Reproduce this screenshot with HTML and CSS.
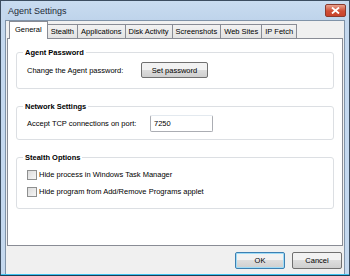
FILE: index.html
```html
<!DOCTYPE html>
<html lang="en">
<head>
  <meta charset="UTF-8" />
  <title>Agent Settings</title>
  <link rel="stylesheet" href="styles.css">
</head>
<body>
  <div class="window">
    <!-- Title bar -->
    <div class="titlebar">
      <span class="title">Agent Settings</span>
      <span class="close">
        <svg width="9" height="7" viewBox="0 0 9 7"><path d="M1 0.5 L8 6.5 M8 0.5 L1 6.5" stroke="#fff" stroke-width="1.8"/></svg>
      </span>
    </div>
    <div class="client">
      <!-- Tabs -->
      <div class="tabs">
        <span class="tab active">General</span>
        <span class="tab">Stealth</span>
        <span class="tab">Applications</span>
        <span class="tab">Disk Activity</span>
        <span class="tab">Screenshots</span>
        <span class="tab">Web Sites</span>
        <span class="tab">IP Fetch</span>
      </div>
      <div class="panel">
        <fieldset class="group pass">
          <legend>Agent Password</legend>
          <div class="row">
            <span class="label">Change the Agent password:</span>
            <button class="btn set">Set password</button>
          </div>
        </fieldset>
        <fieldset class="group net">
          <legend>Network Settings</legend>
          <div class="row">
            <span class="label wide">Accept TCP connections on port:</span>
            <span class="input">7250</span>
          </div>
        </fieldset>
        <fieldset class="group stealth">
          <legend>Stealth Options</legend>
          <label class="check"><span class="box"></span>Hide process in Windows Task Manager</label>
          <label class="check"><span class="box"></span>Hide program from Add/Remove Programs applet</label>
        </fieldset>
      </div>
      <!-- Dialog buttons -->
      <div class="footer">
        <button class="btn ok">OK</button>
        <button class="btn">Cancel</button>
      </div>
    </div>
  </div>
</body>
</html>
```

FILE: styles.css
```css
html, body { margin: 0; padding: 0; }
body {
  font-family: "Liberation Sans", Arial, sans-serif;
  font-size: 7.5px;
  color: #000;
  background: #fff;
}
.window {
  width: 350px;
  height: 276px;
  box-sizing: border-box;
  border: 1px solid #3c4d60;
  border-bottom-color: #1b3c54;
  background: #c4d8ee;
  padding: 0 4px 1px 4px;
  display: flex;
  flex-direction: column;
  box-shadow: inset 0 -1px 0 #3fc2ef;
}
/* Title bar */
.titlebar {
  height: 19px;
  display: flex;
  align-items: center;
  justify-content: space-between;
  background: linear-gradient(#c9dcf0, #bfd4eb);
}
.title { font-size: 9px; color: #1e2a36; padding-left: 3px; }
.close {
  width: 19px;
  height: 11px;
  margin-right: -1px;
  border: 1px solid #8b3a2e;
  border-radius: 2px;
  background: linear-gradient(#e9a28e, #cf4d35 55%, #c9432b);
  display: flex;
  align-items: center;
  justify-content: center;
}
.client {
  flex: 1;
  background: #f0f0f0;
  border: 1px solid #8093a8;
  border-bottom: 0;
  padding: 1px 1px 0 1px;
  display: flex;
  flex-direction: column;
}
/* Tabs */
.tabs { display: flex; height: 16px; align-items: flex-end; padding-left: 4px; position: relative; z-index: 1; }
.tab {
  height: 13px;
  line-height: 13px;
  padding: 0 3px;
  border: 1px solid #898c95;
  border-bottom: 0;
  margin-right: -1px;
  background: linear-gradient(#f2f2f2, #e3e3e3);
  white-space: nowrap;
}
.tab.active {
  line-height: 15px;
  padding: 0 5px;
  margin: 0 -1px -1px -2px;
  background: #fff;
  position: relative;
  z-index: 2;
  height: 17px;
}
.panel {
  height: 208px;
  background: #fff;
  border: 1px solid #898c95;
  box-sizing: border-box;
  padding: 9px 8px 0 8px;
}
/* Group boxes */
.group {
  border: 1px solid #dcdfe3;
  border-radius: 3px;
  margin: 0 0 13px 0;
  padding: 0 10px;
}
.group legend {
  font-weight: bold;
  padding: 0 2px;
  margin-left: -4px;
  line-height: 9px;
}
.pass { padding-top: 4px; padding-bottom: 9px; }
.net { padding-top: 3px; padding-bottom: 7px; }
.stealth { padding-top: 4px; padding-bottom: 8px; }
.row { display: flex; align-items: center; height: 18px; }
.label { width: 114px; white-space: nowrap; }
.label.wide { width: 123px; }
.btn {
  font-family: inherit;
  font-size: 7.5px;
  height: 16px;
  border: 1px solid #707070;
  border-radius: 2px;
  background: linear-gradient(#f2f2f2 50%, #dddddd 50%, #cfcfcf);
  padding: 0;
  color: #000;
}
.set { width: 67px; }
.input {
  width: 63px;
  height: 17px;
  line-height: 15px;
  border: 1px solid #abadb3;
  border-top-color: #e3e9ef;
  border-radius: 2px;
  padding-left: 3px;
  box-sizing: border-box;
}
.check { display: flex; align-items: center; height: 17px; white-space: nowrap; }
.box {
  width: 8px;
  height: 8px;
  border: 1px solid #8e8f8f;
  background: linear-gradient(135deg, #dcdcdc, #f6f6f6);
  margin-right: 2px;
}
/* Footer */
.footer {
  flex: 1;
  display: flex;
  justify-content: flex-end;
  align-items: center;
  gap: 7px;
  padding-right: 1px;
}
.footer .btn { width: 50px; height: 17px; }
.ok { border-color: #3c7fb1; box-shadow: inset 0 0 0 1px #9fdcf7; }
```
